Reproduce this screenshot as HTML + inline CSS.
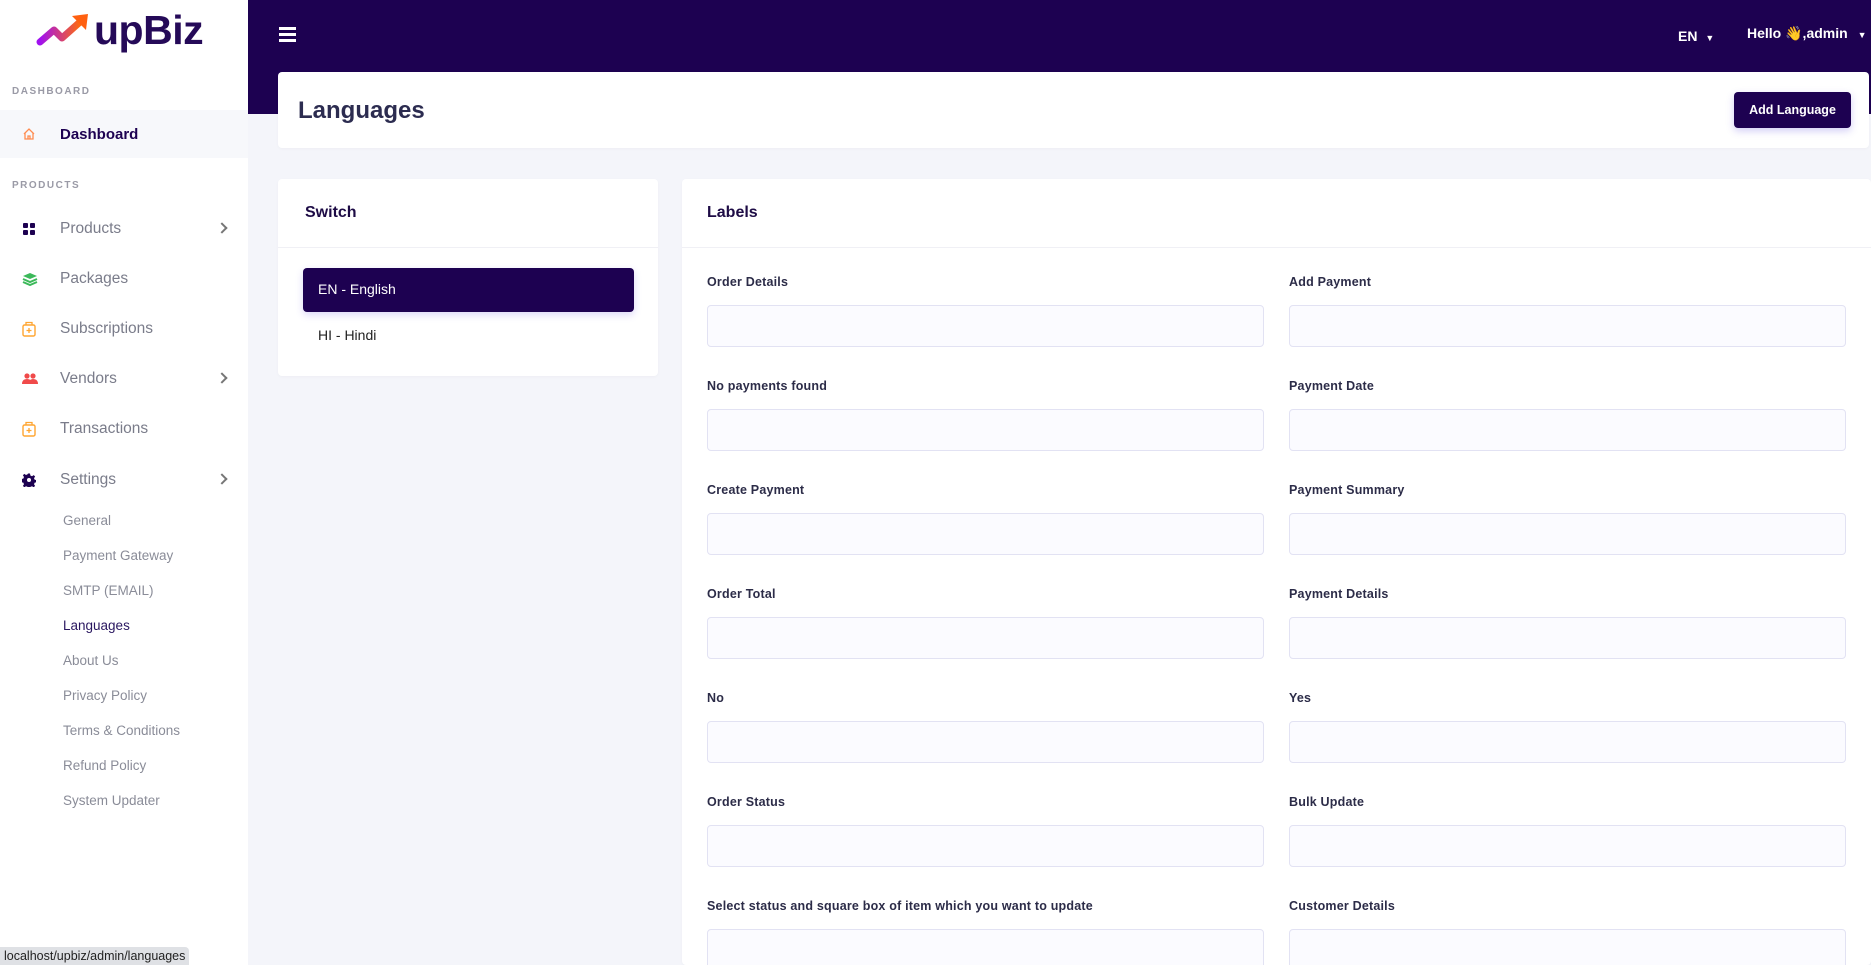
<!DOCTYPE html>
<html><head><meta charset="utf-8"><style>
*{box-sizing:border-box;margin:0;padding:0}
html,body{width:1871px;height:965px;overflow:hidden}
body{background:#f4f5fa;font-family:"Liberation Sans",sans-serif;position:relative}
.side{position:absolute;left:0;top:0;width:248px;height:965px;background:#fff}
.topbar{position:absolute;left:248px;top:0;right:0;height:114px;background:#1d0151}
.abs{position:absolute}
.sec{position:absolute;left:12px;font-size:10px;font-weight:bold;letter-spacing:1.5px;color:#9a9aa6}
.mi{position:absolute;left:0;width:248px;height:50px;display:flex;align-items:center;font-size:15.5px;color:#7a7c8a}
.mi .ic{width:60px;padding-left:22px;display:flex}
.mi .ch{position:absolute;left:218px;top:20px;width:8px;height:8px;border-right:2px solid #777;border-top:2px solid #777;transform:rotate(45deg)}
.sub{position:absolute;left:63px;font-size:13.5px;color:#8a8c98}
.card{position:absolute;background:#fff;border-radius:4px;box-shadow:0 1px 3px rgba(0,0,0,.03)}
.lbl{position:absolute;font-size:12.5px;font-weight:bold;color:#2c2c48;letter-spacing:.2px}
.inp{position:absolute;height:42px;border:1px solid #e2e2f3;background:#fbfbff;border-radius:4px}
</style></head><body>
<div class="side">
  <div class="abs" style="left:36px;top:10px;display:flex;align-items:center">
    <svg width="56" height="40" viewBox="0 0 56 40"><defs><linearGradient id="g" x1="0" x2="1"><stop offset="0" stop-color="#a010f0"/><stop offset="1" stop-color="#ff6a10"/></linearGradient></defs>
    <path d="M4 32 L18 20 L26 28 L44 12" stroke="url(#g)" stroke-width="7" fill="none" stroke-linecap="round" stroke-linejoin="round"/><path d="M36 6 L52 4 L50 20 Z" fill="#ff6010"/></svg>
    <span style="font-size:41px;font-weight:bold;color:#250a58;letter-spacing:-0.5px;line-height:40px;margin-left:2px">upBiz</span>
  </div>
  <div class="sec" style="top:86px">DASHBOARD</div>
  <div class="mi" style="top:110px;height:48px;background:#f7f8fb;color:#1d0151;font-weight:bold;font-size:15px">
    <div class="ic"><svg width="14" height="14" viewBox="0 0 14 14"><path d="M2 7 L7 2 L12 7 M3 6 V12 H11 V6 M6 12 V9 H8 V12" stroke="#ff8c50" stroke-width="1.3" fill="none"/></svg></div>Dashboard</div>
  <div class="sec" style="top:180px">PRODUCTS</div>
  <div class="mi" style="top:204px"><div class="ic"><svg width="14" height="14"><rect x="1" y="1" width="5" height="5" rx="1" fill="#1d0151"/><rect x="8" y="1" width="5" height="5" rx="1" fill="#1d0151"/><rect x="1" y="8" width="5" height="5" rx="1" fill="#1d0151"/><rect x="8" y="8" width="5" height="5" rx="1" fill="#1d0151"/></svg></div>Products<span class="ch"></span></div>
  <div class="mi" style="top:254px"><div class="ic"><svg width="16" height="14"><path d="M8 1 L15 4 L8 7 L1 4Z" fill="#3cb95a"/><path d="M1 7 L8 10 L15 7 M1 10 L8 13 L15 10" stroke="#3cb95a" stroke-width="2" fill="none"/></svg></div>Packages</div>
  <div class="mi" style="top:304px"><div class="ic"><svg width="14" height="16"><rect x="1" y="4" width="12" height="11" rx="1.5" stroke="#ffa530" stroke-width="1.4" fill="none"/><path d="M4 4 V1.5 H10 V4 M7 7 V12 M4.5 9.5 H9.5" stroke="#ffa530" stroke-width="1.3" fill="none"/></svg></div>Subscriptions</div>
  <div class="mi" style="top:354px"><div class="ic"><svg width="16" height="12"><circle cx="5" cy="3" r="2.6" fill="#f04a4a"/><circle cx="11" cy="3" r="2.6" fill="#f04a4a"/><path d="M0 11 Q0 6 5 6 Q10 6 10 11Z M7 11 Q7 6 11 6 Q16 6 16 11Z" fill="#f04a4a"/></svg></div>Vendors<span class="ch"></span></div>
  <div class="mi" style="top:404px"><div class="ic"><svg width="14" height="16"><rect x="1" y="4" width="12" height="11" rx="1.5" stroke="#ffa530" stroke-width="1.4" fill="none"/><path d="M4 4 V1.5 H10 V4 M7 7 V12 M4.5 9.5 H9.5" stroke="#ffa530" stroke-width="1.3" fill="none"/></svg></div>Transactions</div>
  <div class="mi" style="top:455px"><div class="ic"><svg width="14" height="14" viewBox="0 0 14 14"><path d="M6 0.5h2l.4 2 1.6.7 1.7-1.1 1.4 1.4-1.1 1.7.7 1.6 2 .4v2l-2 .4-.7 1.6 1.1 1.7-1.4 1.4-1.7-1.1-1.6.7-.4 2H6l-.4-2-1.6-.7-1.7 1.1-1.4-1.4 1.1-1.7-.7-1.6-2-.4V6l2-.4.7-1.6-1.1-1.7 1.4-1.4 1.7 1.1 1.6-.7z" fill="#1d0151"/><circle cx="7" cy="7" r="2" fill="#fff"/></svg></div>Settings<span class="ch"></span></div>
  <div class="sub" style="top:513px">General</div>
  <div class="sub" style="top:548px">Payment Gateway</div>
  <div class="sub" style="top:583px">SMTP (EMAIL)</div>
  <div class="sub" style="top:618px;color:#2a1760">Languages</div>
  <div class="sub" style="top:653px">About Us</div>
  <div class="sub" style="top:688px">Privacy Policy</div>
  <div class="sub" style="top:723px">Terms &amp; Conditions</div>
  <div class="sub" style="top:758px">Refund Policy</div>
  <div class="sub" style="top:793px">System Updater</div>
</div>
<div class="topbar">
  <div class="abs" style="left:31px;top:27px;width:17px"><div style="height:3px;background:#fff;margin-bottom:3px"></div><div style="height:3px;background:#fff;margin-bottom:3px"></div><div style="height:3px;background:#fff"></div></div>
  <div class="abs" style="left:1430px;top:28px;color:#fff;font-weight:bold;font-size:14px">EN <span style="font-size:9px;margin-left:4px">▼</span></div>
  <div class="abs" style="left:1499px;top:25px;color:#fff;font-weight:bold;font-size:14px">Hello 👋,admin <span style="font-size:9px;margin-left:6px">▼</span></div>
</div>
<div class="card" style="left:278px;top:72px;width:1591px;height:76px">
  <div class="abs" style="left:20px;top:25px;font-size:24px;font-weight:bold;color:#2c2c50">Languages</div>
  <div class="abs" style="left:1456px;top:20px;width:117px;height:36px;background:#1d0151;border-radius:4px;color:#fff;font-size:12.5px;font-weight:bold;display:flex;align-items:center;justify-content:center;box-shadow:0 3px 8px rgba(80,60,220,.25)">Add Language</div>
</div>
<div class="card" style="left:278px;top:179px;width:380px;height:197px">
  <div class="abs" style="left:27px;top:25px;font-size:16px;font-weight:bold;color:#1d0b45">Switch</div>
  <div class="abs" style="left:0;top:68px;width:380px;height:1px;background:#f0f0f5"></div>
  <div class="abs" style="left:25px;top:89px;width:331px;height:44px;background:#1d0151;border-radius:4px;color:#fff;font-size:14px;padding:13px 15px;box-shadow:0 3px 8px rgba(80,60,220,.2)">EN - English</div>
  <div class="abs" style="left:40px;top:148px;font-size:14px;color:#222">HI - Hindi</div>
</div>
<div class="card" style="left:682px;top:179px;width:1189px;height:786px">
  <div class="abs" style="left:25px;top:25px;font-size:16px;font-weight:bold;color:#1d0b45">Labels</div>
  <div class="abs" style="left:0;top:68px;width:1189px;height:1px;background:#f0f0f5"></div>
  <div class="lbl" style="left:25px;top:96px">Order Details</div><div class="lbl" style="left:607px;top:96px">Add Payment</div>
  <div class="inp" style="left:25px;top:126px;width:557px"></div><div class="inp" style="left:607px;top:126px;width:557px"></div>
  <div class="lbl" style="left:25px;top:200px">No payments found</div><div class="lbl" style="left:607px;top:200px">Payment Date</div>
  <div class="inp" style="left:25px;top:230px;width:557px"></div><div class="inp" style="left:607px;top:230px;width:557px"></div>
  <div class="lbl" style="left:25px;top:304px">Create Payment</div><div class="lbl" style="left:607px;top:304px">Payment Summary</div>
  <div class="inp" style="left:25px;top:334px;width:557px"></div><div class="inp" style="left:607px;top:334px;width:557px"></div>
  <div class="lbl" style="left:25px;top:408px">Order Total</div><div class="lbl" style="left:607px;top:408px">Payment Details</div>
  <div class="inp" style="left:25px;top:438px;width:557px"></div><div class="inp" style="left:607px;top:438px;width:557px"></div>
  <div class="lbl" style="left:25px;top:512px">No</div><div class="lbl" style="left:607px;top:512px">Yes</div>
  <div class="inp" style="left:25px;top:542px;width:557px"></div><div class="inp" style="left:607px;top:542px;width:557px"></div>
  <div class="lbl" style="left:25px;top:616px">Order Status</div><div class="lbl" style="left:607px;top:616px">Bulk Update</div>
  <div class="inp" style="left:25px;top:646px;width:557px"></div><div class="inp" style="left:607px;top:646px;width:557px"></div>
  <div class="lbl" style="left:25px;top:720px">Select status and square box of item which you want to update</div><div class="lbl" style="left:607px;top:720px">Customer Details</div>
  <div class="inp" style="left:25px;top:750px;width:557px"></div><div class="inp" style="left:607px;top:750px;width:557px"></div>
</div>
<div class="abs" style="left:0;top:947px;width:189px;height:18px;background:#dfe1e5;border-top-right-radius:4px;font-size:12.5px;color:#222;padding:2px 4px">localhost/upbiz/admin/languages</div>
</body></html>
